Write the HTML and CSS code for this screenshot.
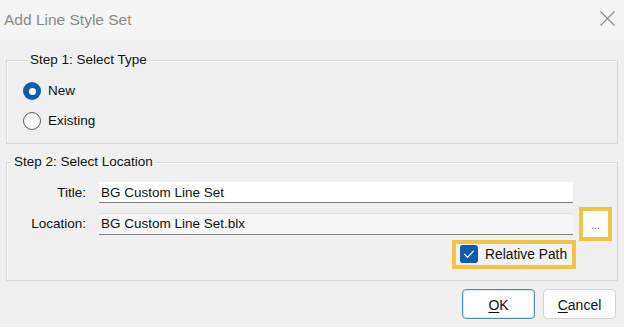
FILE: index.html
```html
<!DOCTYPE html>
<html lang="en">
<head>
<meta charset="utf-8">
<title>Add Line Style Set</title>
<link rel="stylesheet" href="styles.css">
</head>
<body>
<div class="dialog">
  <header class="titlebar">
    <span class="title">Add Line Style Set</span>
    <span class="close" aria-label="Close">
      <svg width="15" height="15" viewBox="0 0 15 15"><path d="M0.5 0.5L14.5 14.5M14.5 0.5L0.5 14.5" stroke="#8a8a8a" stroke-width="1.1" fill="none"/></svg>
    </span>
  </header>
  <main class="content">
    <fieldset class="group group-type">
      <legend>Step 1: Select Type</legend>
      <div class="radio-row"><span class="radio checked"></span><span>New</span></div>
      <div class="radio-row"><span class="radio"></span><span>Existing</span></div>
    </fieldset>
    <fieldset class="group group-location">
      <legend>Step 2: Select Location</legend>
      <div class="field-row">
        <span class="field-label">Title:</span>
        <span class="input">BG Custom Line Set</span>
      </div>
      <div class="field-row field-row-location">
        <span class="field-label">Location:</span>
        <span class="input input-readonly">BG Custom Line Set.blx</span>
        <span class="highlight hl-browse"><span class="browse">...</span></span>
      </div>
      <div class="check-row">
        <span class="highlight hl-check">
          <span class="checkbox"><svg width="18" height="18" viewBox="0 0 18 18"><path d="M4.6 9.4L7.6 12.3L13.4 6.2" stroke="#ffffff" stroke-width="1.2" fill="none" stroke-linecap="round" stroke-linejoin="round"/></svg></span>
          <span class="check-text">Relative Path</span>
        </span>
      </div>
    </fieldset>
  </main>
  <footer class="buttons">
    <span class="btn btn-default"><u>O</u>K</span>
    <span class="btn"><u>C</u>ancel</span>
  </footer>
</div>
</body>
</html>
```

FILE: styles.css
```css
html, body {
  margin: 0;
  padding: 0;
}
body {
  background: #f0f0f0;
  font-family: "Liberation Sans", Arial, sans-serif;
  font-size: 13.5px;
  color: #111111;
  width: 624px;
  height: 327px;
  overflow: hidden;
}
.dialog {
  width: 624px;
  height: 327px;
  display: flex;
  flex-direction: column;
}
.titlebar {
  height: 40px;
  box-sizing: border-box;
  padding: 0 9px 1px 4px;
  background: #f5f5f5;
  display: flex;
  align-items: center;
  justify-content: space-between;
}
.title {
  font-size: 15.5px;
  color: #8b8b8b;
  line-height: 18px;
}
.close {
  width: 15px;
  height: 15px;
  align-self: flex-start;
  margin-top: 11px;
  display: block;
}
.close svg { display: block; }
.content {
  padding: 0 6px;
}
.group {
  margin: 0;
  padding: 0;
  border: 1px solid #dadada;
  box-shadow: inset 1px 1px 0 #fafafa;
  min-inline-size: 0;
}
.group legend {
  margin-left: 5px;
  padding: 0 2px;
  line-height: 16px;
  font-size: 13.5px;
  color: #111111;
}
.group-type {
  margin-top: 12px;
  padding: 8px 0 7px 16px;
}
.radio-row {
  height: 30px;
  display: flex;
  align-items: center;
  gap: 7px;
  line-height: 16px;
}
.radio {
  width: 18px;
  height: 18px;
  box-sizing: border-box;
  border-radius: 50%;
  border: 1px solid #5e5e5e;
  background: #f9f9f9;
  display: flex;
  align-items: center;
  justify-content: center;
}
.radio.checked {
  border: none;
  background: #0f5cad;
}
.radio.checked::after {
  content: "";
  width: 7px;
  height: 7px;
  border-radius: 50%;
  background: #ffffff;
}
.group-location {
  margin-top: 10px;
  padding: 12px 0 11px 0;
}
.field-row {
  display: flex;
  align-items: center;
  height: 21px;
}
.field-label {
  width: 79px;
  margin-right: 13px;
  text-align: right;
  line-height: 16px;
}
.input {
  width: 474px;
  height: 21px;
  box-sizing: border-box;
  background: #ffffff;
  border-bottom: 1px solid #7f7f7f;
  padding: 0 2px;
  line-height: 21px;
  display: block;
}
.input-readonly {
  height: 22px;
  background: #f6f6f6;
  border-top: 1px solid #e4e4e4;
  line-height: 20px;
}
.field-row-location {
  height: 34px;
  margin-top: 4px;
}
.highlight {
  border: 4px solid #f5c343;
  box-sizing: border-box;
  display: flex;
  align-items: center;
}
.hl-browse {
  width: 33px;
  height: 34px;
  margin-left: 6px;
}
.browse {
  width: 25px;
  height: 26px;
  background: #fdfdfd;
  font-size: 10px;
  color: #555555;
  text-align: center;
  line-height: 30px;
  display: block;
}
.check-row {
  display: flex;
  justify-content: flex-end;
  padding-right: 41px;
  margin-top: -1px;
}
.hl-check {
  width: 124px;
  height: 29px;
  padding: 0 4px;
  gap: 7px;
  background: #f3f3f3;
}
.checkbox {
  width: 18px;
  height: 18px;
  border-radius: 3px;
  background: #0f5cad;
  display: block;
  margin-top: -2px;
}
.checkbox svg { display: block; }
.check-text {
  line-height: 16px;
  font-size: 13.8px;
}
.buttons {
  display: flex;
  justify-content: flex-end;
  gap: 8px;
  padding: 8px 8px 0 0;
}
.btn {
  width: 73px;
  height: 30px;
  box-sizing: border-box;
  border: 1px solid #d3d3d3;
  border-radius: 4px;
  background: #fdfdfd;
  display: flex;
  align-items: center;
  justify-content: center;
  font-size: 14px;
  line-height: 16px;
  padding-top: 1px;
}
.btn u {
  text-decoration: underline;
  text-underline-offset: 2px;
}
.btn-default {
  border: 1px solid #4f8fab;
  box-shadow: inset 0 0 0 1px #dbe9ef;
}
```
